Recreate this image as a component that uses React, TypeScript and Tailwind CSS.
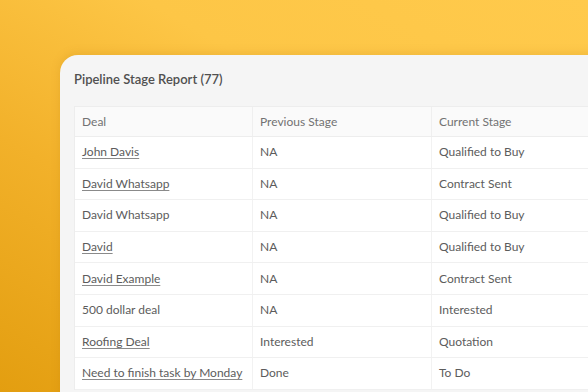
import React from 'react';

const rows = [
  { deal: 'John Davis', link: true, prev: 'NA', cur: 'Qualified to Buy' },
  { deal: 'David Whatsapp', link: true, prev: 'NA', cur: 'Contract Sent' },
  { deal: 'David Whatsapp', link: false, prev: 'NA', cur: 'Qualified to Buy' },
  { deal: 'David', link: true, prev: 'NA', cur: 'Qualified to Buy' },
  { deal: 'David Example', link: true, prev: 'NA', cur: 'Contract Sent' },
  { deal: '500 dollar deal', link: false, prev: 'NA', cur: 'Interested' },
  { deal: 'Roofing Deal', link: true, prev: 'Interested', cur: 'Quotation' },
  { deal: 'Need to finish task by Monday', link: true, prev: 'Done', cur: 'To Do' },
];

export default function App() {
  return (
    <div
      className="w-[588px] h-[392px] overflow-hidden bg-[linear-gradient(210deg,#ffca4c_0%,#fdc646_35%,#f2b12a_65%,#e39e10_100%)] pl-[60px] pt-[55px]"
      style={{ fontFamily: 'Lato, "Open Sans", sans-serif' }}
    >
      <div className="w-[560px] h-[360px] bg-[#f5f5f5] rounded-tl-[18px] shadow-[0_-2px_10px_rgba(170,110,0,0.18)] pl-[14px] pt-[14px]">
        <h2 className="text-[13px] leading-5 font-semibold text-[#505050] mb-[17px]">
          Pipeline Stage Report (77)
        </h2>
        <div className="w-[540px] bg-white border-l border-t border-[#ededed]">
          <div className="flex h-[30px] bg-[#fafafa] border-b border-[#ededed] text-[12px] text-[#727272]">
            <div className="w-[178px] shrink-0 px-[7px] flex items-center border-r border-[#efefef]">Deal</div>
            <div className="w-[179px] shrink-0 px-[7px] flex items-center border-r border-[#efefef]">Previous Stage</div>
            <div className="flex-1 px-[7px] flex items-center">Current Stage</div>
          </div>
          {rows.map((r, i) => (
            <div key={i} className="flex h-[31.6px] border-b border-[#f0f0f0] text-[12px] text-[#5c5c5c]">
              <div className="w-[178px] shrink-0 px-[7px] flex items-center border-r border-[#f2f2f2]">
                <span className={r.link ? 'underline underline-offset-[2px] decoration-[#8a8a8a]' : ''}>{r.deal}</span>
              </div>
              <div className="w-[179px] shrink-0 px-[7px] flex items-center border-r border-[#f2f2f2]">{r.prev}</div>
              <div className="flex-1 px-[7px] flex items-center">{r.cur}</div>
            </div>
          ))}
        </div>
      </div>
    </div>
  );
}
